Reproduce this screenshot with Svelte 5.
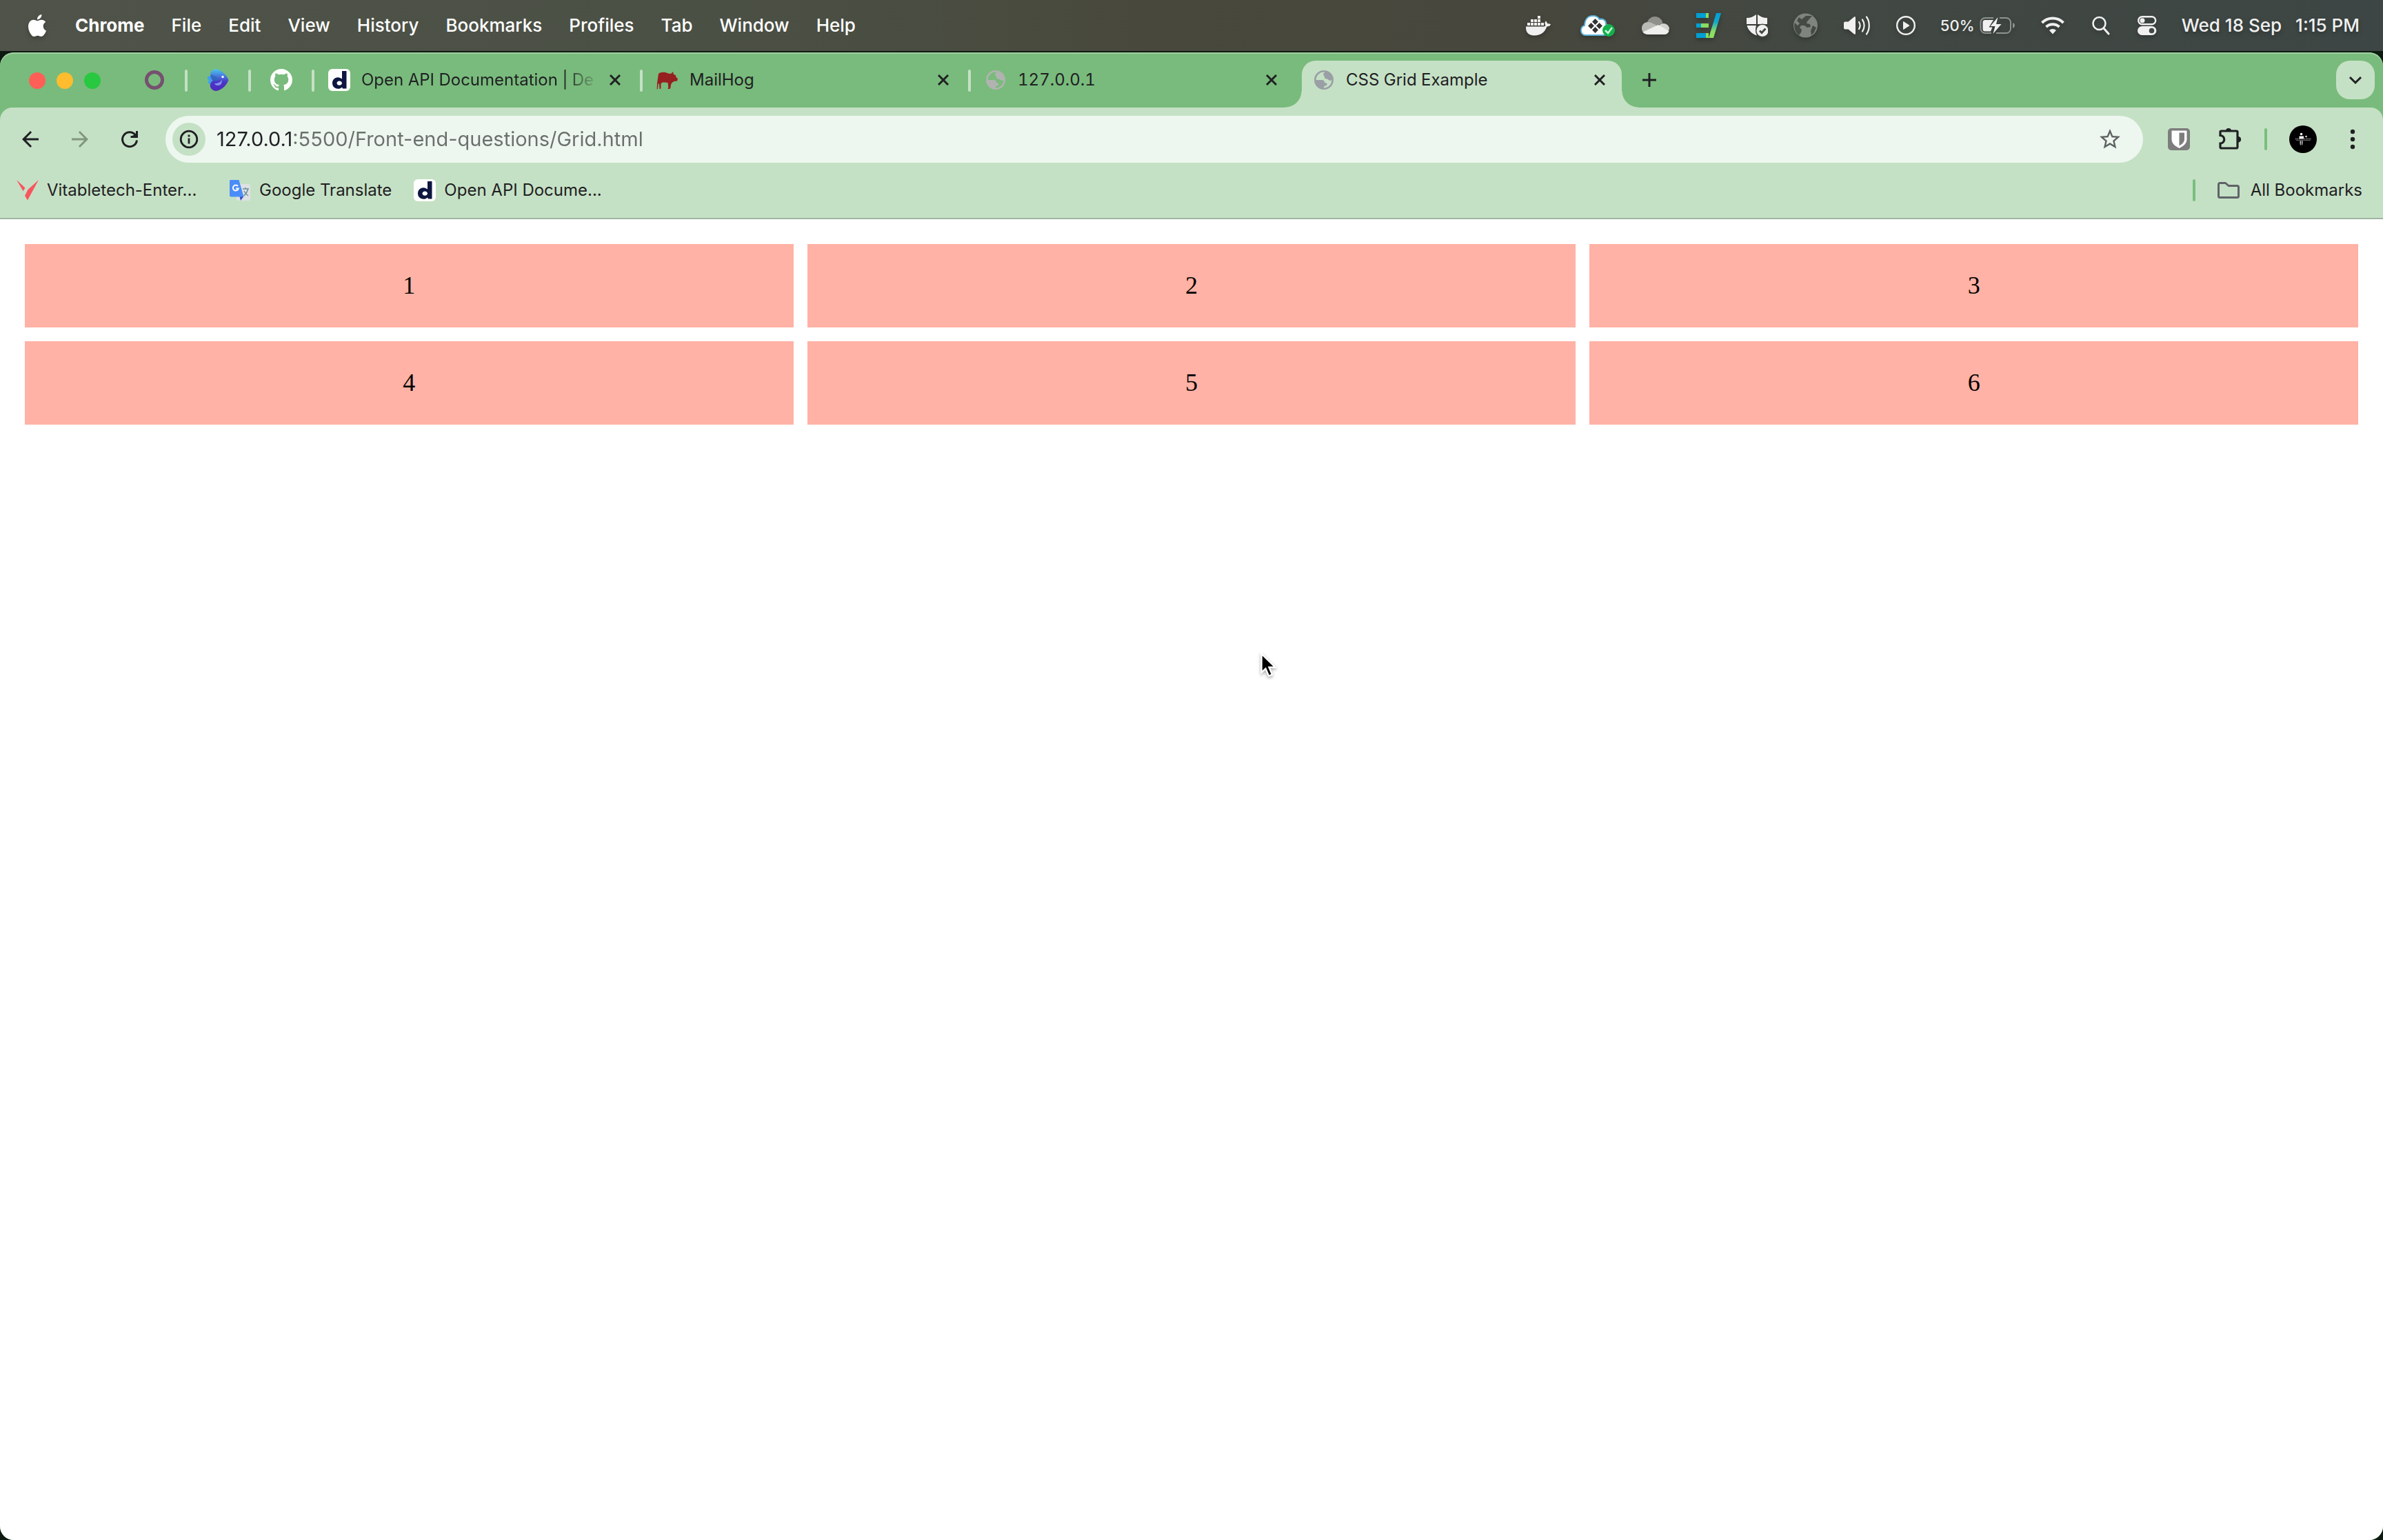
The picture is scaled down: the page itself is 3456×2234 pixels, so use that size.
<script>
  const menus = ['File', 'Edit', 'View', 'History', 'Bookmarks', 'Profiles', 'Tab', 'Window', 'Help'];
  const tabs = [
    { title: 'Open API Documentation | De', icon: 'd', active: false, faded: true },
    { title: 'MailHog', icon: 'hog', active: false },
    { title: '127.0.0.1', icon: 'globe', active: false },
    { title: 'CSS Grid Example', icon: 'globe', active: true }
  ];
  const bookmarks = [
    { title: 'Vitabletech-Enter...', icon: 'v' },
    { title: 'Google Translate', icon: 'translate' },
    { title: 'Open API Docume...', icon: 'd' }
  ];
  const cells = [1, 2, 3, 4, 5, 6];
  let url = $state('127.0.0.1:5500/Front-end-questions/Grid.html');
</script>

{#snippet favicon(name)}
  {#if name === 'd'}
    <svg width="32" height="32" viewBox="0 0 32 32" aria-hidden="true">
      <rect width="32" height="32" rx="6" fill="#fff" />
      <path d="M20 3h6.500v25.500h-5.500l-1-2c-1.400 1.500-3.400 2.300-5.900 2.300C9.200 28.800 6 25.300 6 20.600s3.200-8.400 7.900-8.400c2.500 0 4.600.9 6.100 2.400zM16.200 17.400c-2.200 0-3.700 1.400-3.700 3.200s1.500 3.200 3.700 3.200 3.800-1.400 3.800-3.200-1.600-3.200-3.800-3.200z" fill="#0d1640" fill-rule="evenodd" />
    </svg>
  {:else if name === 'hog'}
    <svg width="32" height="32" viewBox="0 0 32 32" aria-hidden="true">
      <path d="M3 7C6 4.500 12 4 17 6.500l4 .5 3-3 1 4 3 1 .5 3 2.500 2-1 3.500-4.500.5-3 2-1.500 3-.5 4-1 2h-3l.8-3-.8-6-4-.5h-4l-2 2v7l-2 .5-.5-8-1.500 1-.5 7-1.300.5.3-9z" fill="#96201f" />
    </svg>
  {:else if name === 'globe'}
    <svg width="32" height="32" viewBox="0 0 32 32" class="globe" aria-hidden="true">
      <circle cx="16" cy="16" r="12.700" fill="none" stroke="currentColor" stroke-width="2.600" />
      <path d="M4 16h9c4 0 4 3 4 4 3 0 4 1 3.500 3-.5 2-4.500 1-4.500 3v2.500C9 28.500 4 22 4 16zM18.500 4c-2.500 2-4.500 3-2.500 5.500 1 1.200.5 3 1.500 4 1.500 1.600 4 .5 5.500 2.500 1.500 1.600 4 1 5-.5C28 9 23 4.500 18.500 4z" fill="currentColor" />
    </svg>
  {:else if name === 'v'}
    <svg width="32" height="32" viewBox="0 0 32 32" aria-hidden="true">
      <path d="M0 1l12.500 11.500-3 4.800zM32 1L16 30.500 12 24l4.500-9z" fill="#f9555f" />
    </svg>
  {:else if name === 'translate'}
    <svg width="32" height="32" viewBox="0 0 32 32" aria-hidden="true">
      <rect x="11" y="7" width="20" height="24" rx="2" fill="#dfe1e4" />
      <path d="M15.500 25h6L17 31z" fill="#3a4fc4" />
      <path d="M2.500 1H14.500L21.500 25.500H3A2 2 0 0 1 1 23.500V2.500A1.500 1.500 0 0 1 2.500 1z" fill="#4b8df8" />
      <path d="M13 10A4 4 0 1 0 13.800 13.500H10" fill="none" stroke="#fff" stroke-width="2" />
      <path d="M20 14h9M24 12v2M27.500 14c-.8 4.500-3.500 8-6 10M22 17c1.500 3 3 5 6 7" fill="none" stroke="#6b8f99" stroke-width="1.500" />
    </svg>
  {/if}
{/snippet}

<svelte:head><title>CSS Grid Example</title></svelte:head>

<div class="desktop">
  <header class="menubar">
    <nav class="menus" aria-label="Application menu">
      <button class="apple" aria-label="Apple menu">
        <svg width="32" height="32" viewBox="0 0 24 24" fill="#fff"><path d="M12.152 6.896c-.948 0-2.415-1.078-3.960-1.040-2.040.027-3.910 1.183-4.961 3.014-2.117 3.675-.546 9.103 1.519 12.090 1.013 1.454 2.208 3.090 3.792 3.039 1.520-.065 2.090-.987 3.935-.987 1.831 0 2.350.987 3.960.948 1.637-.026 2.676-1.480 3.676-2.948 1.156-1.688 1.636-3.325 1.662-3.415-.039-.013-3.182-1.221-3.220-4.857-.026-3.040 2.480-4.494 2.597-4.559-1.429-2.090-3.623-2.324-4.390-2.376-2-.156-3.675 1.090-4.610 1.090zM15.530 3.830c.843-1.012 1.400-2.427 1.245-3.830-1.207.052-2.662.805-3.532 1.818-.780.896-1.454 2.338-1.273 3.714 1.338.104 2.715-.688 3.559-1.701" /></svg>
      </button>
      <button class="app">Chrome</button>
      {#each menus as m}<button>{m}</button>{/each}
    </nav>

    <div class="status">
      <svg width="44" height="36" viewBox="0 0 44 36" fill="#f0f0f0">
        <path d="M18 4h4v4h-4zM8 9h4v4H8zM13 9h4v4h-4zM18 9h4v4h-4zM3 14h4v4H3zM8 14h4v4H8zM13 14h4v4h-4zM18 14h4v4h-4zM23 14h4v4h-4z" />
        <path d="M1 19.500h25c1.500 0 2.800-.6 3.500-1.600-1.500-2-1.300-4.500.2-6.400 1.400.9 2.200 2.200 2.400 3.800 1.600-.3 3.500 0 4.900 1-1 2.300-3 3.200-5.600 3.200C28.500 27.500 23 32.500 13 32.500 4.500 32.500.5 27.500 1 19.500z" />
      </svg>
      <svg width="52" height="36" viewBox="0 0 52 36">
        <path d="M8 32C3 32 1 28.500 1 25c0-4 2.500-6.500 5-7C6.500 9 11 4 18 4c5 0 8 2 9.500 5C33 7.500 37.500 11 37 16c4 1.500 5 5 5 8 0 5-3 8-8 8z" fill="#fff" stroke="#5cb4dc" stroke-width="2" />
        <g fill="#333"><path d="M21.500 8l4.500 4.500-4.500 4.500-4.500-4.500zM15.500 14l4.500 4.500-4.500 4.500-4.500-4.500zM27.500 14l4.500 4.500-4.500 4.500-4.500-4.500zM21.500 20l4.500 4.500-4.500 4.500-4.500-4.500z" /></g>
        <circle cx="41" cy="25" r="9" fill="#12b04c" />
        <path d="M36 25l4 4 6-8" fill="none" stroke="#c9f5d6" stroke-width="2.500" />
      </svg>
      <svg width="44" height="36" viewBox="0 0 44 36">
        <path d="M9 13C11 8 15 5 20 5c6 0 10 4 11.500 9L20 20z" fill="#8f908b" />
        <path d="M1 22c0-5 3.500-9 9-9 3 0 5 1 7 2l8 4L3 28c-1.500-2-2-4-2-6z" fill="#b9b9b6" />
        <path d="M25 19c2-2.500 4-4 7-4 5 0 8 3 9 7l-1 4z" fill="#d2d2d0" />
        <path d="M2.500 27.500L25 17l15.500 9c-1 3-3.500 5-7 5H10c-3.500 0-6-1.500-7.500-3.500z" fill="#efefee" />
      </svg>
      <svg width="36" height="36" viewBox="0 0 36 36">
        <defs><linearGradient id="slash" x1="0" y1="0" x2="0" y2="1"><stop offset="0" stop-color="#009fd8" /><stop offset=".35" stop-color="#12a8cc" /><stop offset=".75" stop-color="#8ce060" /></linearGradient></defs>
        <path d="M0 0h14v7H0zM0 15h7v6H0zM0 29h14v7H0z" fill="#009fd4" />
        <path d="M14 0h4v7h-4zM7 15h11v6H7zM14 29h4v7h-4z" fill="#88dc60" />
        <path d="M29 0h7L25 36h-7z" fill="url(#slash)" />
      </svg>
      <svg width="32" height="36" viewBox="0 0 32 36" fill="#f0f0f0">
        <path d="M15 2v14H1V7c6 0 10-2 14-5zM17 2c4 3 8 5 14 5v9H17zM1.500 18H15c-1.500 4-1 10 1 14.500C8 30 3 24 1.500 18z" />
        <circle cx="24" cy="25.500" r="10" fill="#444941" />
        <circle cx="24" cy="25.500" r="8.500" />
        <path d="M20 25.500l3 3 5.500-6" fill="none" stroke="#444941" stroke-width="3" />
      </svg>
      <svg width="38" height="36" viewBox="0 0 38 36">
        <circle cx="18.500" cy="18" r="17.500" fill="#7f847f" />
        <path d="M28 4l-7 8-1 3 5 1 1 4-5 1-4-3-5 0-2 3 3 3-1 4-3 4C3 28 1 20 3 14l4 4 3-3-4-4 3-5 4 3 6-5zM29 18l5 3-3 7-4 4-1-6z" fill="#444a44" />
      </svg>
      <svg width="40" height="36" viewBox="0 0 40 36">
        <path d="M0 14.500a2 2 0 0 1 2-2h4.500L15 5.500c1-.8 2-.2 2 1v23c0 1.200-1 1.800-2 1l-8.500-7H2a2 2 0 0 1-2-2z" fill="#f0f0f0" />
        <path d="M22 13c2 3 2 7 0 10M27 9.500c3.500 5 3.500 12 0 17M33 5.500c5 7 5 18 0 25" fill="none" stroke="#f0f0f0" stroke-width="2.200" stroke-linecap="round" />
      </svg>
      <svg width="28" height="36" viewBox="0 0 28 36">
        <circle cx="14" cy="18" r="12.800" fill="none" stroke="#f0f0f0" stroke-width="2.400" />
        <path d="M10.500 12.500v11l8.500-5.500z" fill="#f0f0f0" stroke="#f0f0f0" stroke-linejoin="round" />
      </svg>
      <div class="battery">
        <span>50%</span>
        <svg width="52" height="36" viewBox="0 0 52 36">
          <path d="M20 7H8a6.500 6.500 0 0 0-6.500 6.500v9A6.500 6.500 0 0 0 8 29h9M29 7h9.500a6.500 6.500 0 0 1 6.500 6.500v9a6.500 6.500 0 0 1-6.500 6.500H24" fill="none" stroke="#8f938f" stroke-width="2" />
          <path d="M48 14c4 1.500 4 6.500 0 8z" fill="#8f938f" />
          <path d="M8 10h12l-6.500 10.500h5L16 26.500H8a3.500 3.500 0 0 1-3.500-3.500V13.500A3.500 3.500 0 0 1 8 10z" fill="#f0f0f0" />
          <path d="M26.500 6L15.500 19h7l-3 11L31.500 16h-7.500z" fill="#f0f0f0" />
        </svg>
      </div>
      <svg width="38" height="36" viewBox="0 0 38 36" fill="none" stroke="#f0f0f0" stroke-width="4">
        <path d="M1.500 14a22 22 0 0 1 31 0M7.500 20a14 14 0 0 1 19 0" />
        <path d="M17 30.500l-5-5.500a7 7 0 0 1 10 0z" fill="#f0f0f0" stroke="none" />
      </svg>
      <svg width="30" height="36" viewBox="0 0 30 36" fill="none" stroke="#f0f0f0" stroke-width="2.600" stroke-linecap="round">
        <circle cx="10.500" cy="15" r="9" /><path d="M17 22l7 8" stroke-width="3" />
      </svg>
      <svg width="28" height="36" viewBox="0 0 28 36">
        <rect x="1.200" y="5.200" width="25" height="11" rx="5.500" fill="none" stroke="#f0f0f0" stroke-width="2.400" />
        <circle cx="7" cy="10.700" r="3.500" fill="#f0f0f0" />
        <rect y="19" width="27.400" height="13" rx="6.500" fill="#f0f0f0" />
        <circle cx="20.500" cy="25.500" r="3.800" fill="#424844" />
      </svg>
      <time class="clock"><span>Wed 18 Sep</span><span>1:15 PM</span></time>
    </div>
  </header>

  <div class="window">
    <div class="tabstrip">
      <div class="lights">
        <button class="red" aria-label="Close window"></button>
        <button class="yellow" aria-label="Minimise"></button>
        <button class="green" aria-label="Zoom"></button>
      </div>
      <button class="pinned" aria-label="Odoo">
        <svg width="32" height="32" viewBox="0 0 32 32"><circle cx="16" cy="16" r="11.500" fill="none" stroke="#76506f" stroke-width="5" /></svg>
      </button>
      <button class="pinned" aria-label="Pinned tab">
        <svg width="32" height="32" viewBox="0 0 32 32">
          <defs><linearGradient id="bird" x1="0" y1="0" x2="0" y2="1"><stop offset="0" stop-color="#4cc6ee" /><stop offset=".32" stop-color="#477bdc" /><stop offset=".6" stop-color="#4a36c8" /><stop offset="1" stop-color="#4d2bbd" /></linearGradient></defs>
          <path d="M7 11C4 9 0 11 1 14c0 1.500 2 2 3 2-2 1-3 2-2 4 1 2 4 2 6 1z" fill="#3f9ff0" />
          <path d="M13 0C22 2 29 9 31.500 16 28 25 21 31 13 32 6 31 3 25 5.500 20.500 7 18 9 17 8 16 4 11 3 2 13 0z" fill="url(#bird)" />
          <path d="M6 8c3 1 9 3 11 8-3 1-6 2-9 0-2-2-3-5-2-8z" fill="#2f6abb" opacity=".8" />
          <path d="M11 21c5 0 8-1 11-5 0 5-2 8-6 8-3 0-4-1-5-3z" fill="#8790ea" />
          <circle cx="23" cy="11.500" r="1.700" fill="#fff" />
        </svg>
      </button>
      <button class="pinned" aria-label="GitHub">
        <svg width="32" height="32" viewBox="0 0 16 16" fill="#fff"><path d="M8 0C3.580 0 0 3.580 0 8c0 3.540 2.290 6.530 5.470 7.590.4.070.55-.17.55-.38 0-.19-.01-.82-.01-1.490-2.010.37-2.530-.49-2.690-.94-.09-.23-.48-.94-.82-1.130-.28-.15-.68-.52-.01-.53.63-.01 1.080.58 1.230.82.72 1.210 1.870.87 2.330.66.07-.52.28-.87.51-1.070-1.780-.2-3.640-.89-3.640-3.950 0-.87.31-1.590.82-2.150-.08-.2-.36-1.020.08-2.120 0 0 .67-.21 2.200.82.64-.18 1.320-.27 2-.27.68 0 1.360.09 2 .27 1.530-1.040 2.200-.82 2.200-.82.44 1.100.16 1.920.08 2.120.51.56.82 1.270.82 2.150 0 3.070-1.870 3.750-3.650 3.950.29.25.54.73.54 1.480 0 1.070-.01 1.930-.01 2.200 0 .21.15.46.55.38A8.013 8.013 0 0 0 16 8c0-4.420-3.580-8-8-8z" /></svg>
      </button>
      {#each tabs as t}
        <div class="tab" class:active={t.active}>
          <button class="tab-title">
            {@render favicon(t.icon)}
            <span class:faded={t.faded}>{t.title}</span>
          </button>
          <button class="close" aria-label="Close {t.title}">
            <svg width="16" height="16" viewBox="0 0 16 16" stroke="#1f2023" stroke-width="3"><path d="M1 1l14 14M15 1L1 15" /></svg>
          </button>
        </div>
      {/each}
      <button class="new-tab" aria-label="New tab">
        <svg width="20" height="20" viewBox="0 0 20 20" stroke="#1f2023" stroke-width="3"><path d="M10 0v20M0 10h20" /></svg>
      </button>
      <button class="tab-search" aria-label="Search tabs">
        <svg width="20" height="20" viewBox="0 0 20 20" fill="none" stroke="#1f2023" stroke-width="3"><path d="M2 6l8 8 8-8" /></svg>
      </button>
    </div>

    <div class="chrome">
      <div class="toolbar">
        <div class="nav">
          <button aria-label="Back"><svg width="36" height="36" viewBox="0 0 24 24" fill="#1f2023"><path d="M20 11H7.830l5.590-5.590L12 4l-8 8 8 8 1.410-1.410L7.830 13H20v-2z" /></svg></button>
          <button aria-label="Forward"><svg width="36" height="36" viewBox="0 0 24 24" fill="#82967f"><path d="M12 4l-1.410 1.410L16.170 11H4v2h12.170l-5.580 5.590L12 20l8-8z" /></svg></button>
          <button aria-label="Reload"><svg width="36" height="36" viewBox="0 0 36 36" fill="none" stroke="#1f2023" stroke-width="3"><path d="M26.500 12A10.500 10.500 0 1 0 28.500 19.500" /><path d="M28.500 6v9M19.500 14.500H30" /><path d="M30 13v-5l-8 5z" fill="#1f2023" stroke="none" /></svg></button>
        </div>
        <form class="omnibox">
          <button type="button" class="info" aria-label="View site information">
            <svg width="28" height="28" viewBox="0 0 28 28" fill="none" stroke="#1f2023" stroke-width="2.800"><circle cx="14" cy="14" r="11.800" /><path d="M14 12.500v8M14 7.500v3" /></svg>
          </button>
          <input type="text" aria-label="Address" bind:value={url} spellcheck="false" />
          <button type="button" class="plain" aria-label="Bookmark this tab">
            <svg width="36" height="36" viewBox="0 0 24 24" fill="#5f6363"><path d="M22 9.240l-7.190-.62L12 2 9.190 8.630 2 9.240l5.460 4.730L5.820 21 12 17.270 18.180 21l-1.630-7.030L22 9.240zM12 15.400l-3.760 2.270 1-4.280-3.320-2.880 4.380-.38L12 6.100l1.710 4.040 4.380.38-3.320 2.880 1 4.280L12 15.400z" /></svg>
          </button>
        </form>
        <div class="extensions">
          <button class="plain" aria-label="Bitwarden">
            <svg width="32" height="32" viewBox="0 0 32 32"><rect width="32" height="32" rx="5" fill="#7d7d7d" /><path d="M5.500 3.500h22V16c0 6-5 10-11 13-6-3-11-7-11-13z" fill="#fff" /><path d="M16.500 6.500h7.500V16c0 4-3 7-7.500 9.500z" fill="#7d7d7d" /></svg>
          </button>
          <button class="plain" aria-label="Extensions">
            <svg width="32" height="36" viewBox="0 0 32 36"><path d="M3.500 6h22a1.500 1.500 0 0 1 1.500 1.500v22a1.500 1.500 0 0 1-1.500 1.500H3.500a1.500 1.500 0 0 1-1.500-1.500v-5.500a5.500 5.500 0 0 0 0-11.500V7.500A1.500 1.500 0 0 1 3.500 6z" fill="none" stroke="#1f2023" stroke-width="3.200" /><path d="M10 6a4 4 0 0 1 8 0zM28 14a4 4 0 0 1 0 8.500z" fill="#1f2023" /></svg>
          </button>
          <span class="rule"></span>
          <button class="plain" aria-label="Profile">
            <svg width="40" height="40" viewBox="0 0 40 40"><circle cx="20" cy="20" r="20" fill="#000" /><g fill="#f4f4f4"><circle cx="17.500" cy="12.500" r="1.800" /><path d="M14.500 15.500h6.500v4h-6.500zM15.500 22.500h1.500l-.3 6H15.800zM18 22.500h1.500l-.4 6h-.8z" /><circle cx="24.500" cy="16" r="1.200" /></g><path d="M9 19.500h23" stroke="#999" stroke-width="1.600" stroke-dasharray="1.500 1" /><path d="M10 21.500h21" stroke="#666" /></svg>
          </button>
          <button class="plain dots" aria-label="Chrome menu">
            <svg width="8" height="32" viewBox="0 0 8 32" fill="#1f2023"><circle cx="4" cy="5" r="3.200" /><circle cx="4" cy="16" r="3.200" /><circle cx="4" cy="27" r="3.200" /></svg>
          </button>
        </div>
      </div>

      <nav class="bookmarks" aria-label="Bookmarks">
        {#each bookmarks as b}
          <a href="#{b.icon}">{@render favicon(b.icon)}<span>{b.title}</span></a>
        {/each}
        <span class="rule"></span>
        <button class="all">
          <svg width="32" height="24" viewBox="0 0 32 24" fill="none" stroke="#5f6368" stroke-width="3" stroke-linejoin="round"><path d="M3.500 1.500h8l4.500 4h12.500a2 2 0 0 1 2 2v13a2 2 0 0 1-2 2h-25a2 2 0 0 1-2-2v-17a2 2 0 0 1 2-2z" /></svg>
          <span>All Bookmarks</span>
        </button>
      </nav>
    </div>

    <main>
      <div class="grid">
        {#each cells as c}<div class="cell">{c}</div>{/each}
      </div>
    </main>
  </div>

  <svg class="cursor" width="30" height="42" viewBox="0 0 30 42" aria-hidden="true">
    <path d="M2.500 2.500v27l6-5.500 4.500 10.500 5-2-4.500-10.500h9z" fill="#000" stroke="#fff" stroke-width="2.400" />
  </svg>
</div>

<style>
  :global(body) { margin: 0; }
  .desktop {
    position: relative;
    min-height: 100vh;
    display: flex;
    flex-direction: column;
    background: #0d1a10;
    font-family: Inter, "Liberation Sans", sans-serif;
    color: #1f2023;
  }
  button {
    border: 0;
    padding: 0;
    margin: 0;
    background: none;
    font: inherit;
    color: inherit;
    display: flex;
    align-items: center;
  }
  svg { display: block; flex: none; }

  .menubar {
    height: 74px;
    display: flex;
    justify-content: space-between;
    align-items: center;
    padding: 0 34px 0 38px;
    margin-bottom: 2px;
    background: linear-gradient(90deg, #4f5349 0%, #4b5045 30%, #48493c 48%, #47473d 64%, #424842 76%, #3d4644 100%);
    color: #fff;
    font-size: 26px;
    font-weight: 500;
    line-height: 36px;
  }
  .menus { display: flex; align-items: center; gap: 39px; text-shadow: 0 3px 6px rgba(0, 0, 0, .3); }
  .menus svg, .status svg { filter: drop-shadow(0 3px 3px rgba(0, 0, 0, .25)); }
  .app { font-weight: 700; }
  .status { display: flex; align-items: center; gap: 36px; color: #f0f0f0; text-shadow: 0 3px 6px rgba(0, 0, 0, .3); }
  .battery { display: flex; align-items: center; gap: 8px; width: 110px; font-size: 22px; }
  .clock { display: flex; gap: 20px; white-space: nowrap; }

  .window {
    flex: 1;
    display: flex;
    flex-direction: column;
    background: #79bb7c;
    border-radius: 20px;
    overflow: hidden;
    box-shadow: inset 0 2px 0 #a0cfa2;
  }
  .tabstrip { height: 80px; display: flex; align-items: center; font-size: 24px; line-height: 32px; font-variant-numeric: tabular-nums; }
  .lights { display: flex; gap: 16px; padding: 2px 34px 0 42px; }
  .lights button { width: 24px; height: 24px; border-radius: 50%; }
  .lights .red { background: #ff5f57; }
  .lights .yellow { background: #febc2e; }
  .lights .green { background: #28c840; }
  .pinned, .tab { position: relative; }
  .pinned { width: 92px; height: 32px; padding: 0 4px 0 0; justify-content: center; }
  .pinned::after, .tab::after {
    content: "";
    width: 4px;
    height: 32px;
    border-radius: 2px;
    background: #c5e1c5;
    position: absolute;
    right: 0;
    top: 1px;
  }
  .tab { width: 476px; height: 32px; box-sizing: border-box; padding: 0 32px 0 20px; display: flex; align-items: center; gap: 24px; }
  .tab-title { flex: 1; min-width: 0; gap: 16px; }
  .tab-title span { flex: 1; text-align: left; white-space: nowrap; }
  .faded {
    -webkit-mask-image: linear-gradient(90deg, #000 calc(100% - 44px), rgba(0, 0, 0, .15));
    mask-image: linear-gradient(90deg, #000 calc(100% - 44px), rgba(0, 0, 0, .15));
  }
  .globe { color: #b1b3b1; }
  .active .globe { color: #9a9fa6; }
  .tab:nth-last-child(4) { margin-right: 4px; }
  .tab:nth-last-child(4)::after { display: none; }
  .tab.active {
    width: 464px;
    height: 68px;
    padding: 0 24px 12px 16px;
    margin-top: 12px;
    background: #c5e1c5;
    border-radius: 20px 20px 0 0;
  }
  .tab.active::before, .tab.active::after {
    content: "";
    position: absolute;
    top: auto;
    bottom: 0;
    width: 24px;
    height: 24px;
    border-radius: 0;
  }
  .tab.active::before { left: -24px; background: radial-gradient(circle at 0 0, transparent 23px, #c5e1c5 24px); }
  .tab.active::after { right: -24px; background: radial-gradient(circle at 100% 0, transparent 23px, #c5e1c5 24px); }
  .new-tab { margin-left: 30px; }
  .tab-search { margin: 0 12px 0 auto; width: 56px; height: 56px; border-radius: 20px; background: #c5e1c5; justify-content: center; }

  .chrome { background: #c5e1c5; border-radius: 18px 18px 0 0; border-bottom: 2px solid #9fb5a3; }
  .toolbar { display: flex; align-items: center; padding: 12px 40px 0 26px; }
  .nav { display: flex; gap: 36px; margin-right: 34px; }
  .omnibox {
    flex: 1;
    height: 68px;
    box-sizing: border-box;
    display: flex;
    align-items: center;
    gap: 16px;
    padding: 0 30px 0 10px;
    border-radius: 34px;
    background: #edf7ef;
  }
  .info { width: 48px; height: 48px; border-radius: 50%; background: #c5e1c5; justify-content: center; }
  input {
    flex: 1;
    min-width: 0;
    border: 0;
    padding: 0;
    outline: 0;
    font: 29px/40px Inter, "Liberation Sans", sans-serif;
    color: transparent;
    background: linear-gradient(90deg, #1f2023 112px, #6b6f6d 112px);
    -webkit-background-clip: text;
    background-clip: text;
  }
  .extensions { display: flex; align-items: center; padding-left: 36px; }
  .extensions .plain:nth-child(2) { margin: 0 34px 0 42px; }
  .rule { width: 4px; height: 32px; border-radius: 2px; background: #79bf7e; }
  .extensions .rule { margin-right: 32px; }
  .dots { margin-left: 48px; }

  .bookmarks { height: 80px; display: flex; align-items: center; gap: 32px; padding: 0 30px 0 24px; font-size: 24px; line-height: 32px; }
  .bookmarks a { display: flex; align-items: center; gap: 12px; color: inherit; text-decoration: none; white-space: nowrap; }
  .bookmarks a:first-child { min-width: 276px; }
  .bookmarks .rule { margin-left: auto; }
  .all { gap: 16px; }

  main { flex: 1; background: #fff; padding: 36px; }
  .grid { display: grid; grid-template-columns: repeat(3, 1fr); gap: 20px; }
  .cell {
    padding: 40px;
    background: #ffb2a5;
    color: #000;
    text-align: center;
    font-family: "Liberation Serif", serif;
    font-size: 36px;
    line-height: 41px;
  }
  .cursor { position: absolute; left: 1827px; top: 946px; filter: drop-shadow(0 2px 2px rgba(0, 0, 0, .35)); }
</style>
